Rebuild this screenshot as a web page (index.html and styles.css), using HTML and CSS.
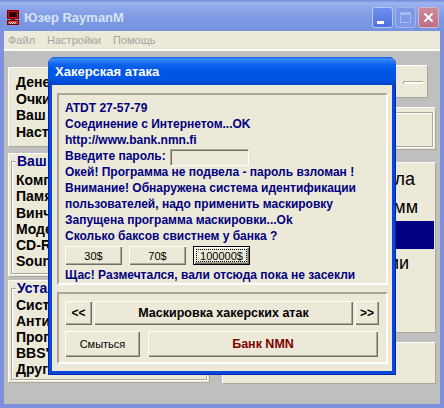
FILE: index.html
```html
<!DOCTYPE html>
<html>
<head>
<meta charset="utf-8">
<title>Юзер RaymanM</title>
<link rel="stylesheet" href="styles.css">
</head>
<body>
<div class="window">
  <div class="titlebar">
    <svg class="appicon" width="12" height="15" viewBox="0 0 12 15">
      <rect x="0.5" y="0.5" width="11" height="8" fill="#d81010" stroke="#700"/>
      <rect x="2" y="2" width="8" height="5" fill="#2a0000"/>
      <rect x="4" y="9" width="4" height="1" fill="#900"/>
      <rect x="0.5" y="10.5" width="11" height="4" fill="#e03030" stroke="#700"/>
      <path d="M2 12.5h1M4 12.5h1M6 12.5h1M8 12.5h1M3 13.5h1M5 13.5h1M7 13.5h1" stroke="#fff" stroke-width="1"/>
    </svg>
    <span class="title">Юзер RaymanM</span>
    <div class="tbtns">
      <span class="tbtn tmin"><span class="us"></span></span>
      <span class="tbtn tmax"><span class="sq"></span></span>
      <span class="tbtn tclose">
        <svg width="11" height="11" viewBox="0 0 11 11"><path d="M1.5 1.5l8 8M9.5 1.5l-8 8" stroke="#fff" stroke-width="2"/></svg>
      </span>
    </div>
  </div>
  <div class="frame">
    <div class="menubar"><span>Файл</span><span>Настройки</span><span>Помощь</span></div>
    <div class="client">
      <div class="col colleft">
        <div class="panel pa">
          <div>Дене</div>
          <div>Очки</div>
          <div>Ваш</div>
          <div>Наст</div>
        </div>
        <div class="panel pb">
          <fieldset class="grp">
            <legend>Ваш к</legend>
            <div class="items items-b">
              <div>Комп</div>
              <div>Памя</div>
              <div>Винч</div>
              <div>Моде</div>
              <div>CD-R</div>
              <div>Soun</div>
            </div>
          </fieldset>
        </div>
        <div class="panel pc">
          <fieldset class="grp">
            <legend>Устан</legend>
            <div class="items items-c">
              <div>Сист</div>
              <div>Анти</div>
              <div>Прог</div>
              <div>BBS'</div>
              <div>Друг</div>
            </div>
          </fieldset>
        </div>
      </div>
      <div class="col colright">
        <div class="panel p1"><span class="slot"></span></div>
        <div class="panel p2"><div class="etch"></div></div>
        <div class="panel p3">
          <div class="list">
            <div class="lrow r1">ла</div>
            <div class="lrow r2">мм</div>
            <div class="lrow r3 sel"></div>
            <div class="lrow r4">ии</div>
          </div>
        </div>
        <div class="panel p4"></div>
      </div>
    </div>
  </div>

  <div class="dialog">
    <div class="dtitle">Хакерская атака</div>
    <div class="dbody">
      <div class="sunk log">
        <div class="ln">ATDT 27-57-79</div>
        <div class="ln">Соединение с Интернетом...OK</div>
        <div class="ln">http://www.bank.nmn.fi</div>
        <div class="ln pw"><span class="lbl">Введите пароль:</span><span class="inp"></span></div>
        <div class="ln">Окей! Программа не подвела - пароль взломан !</div>
        <div class="ln">Внимание! Обнаружена система идентификации</div>
        <div class="ln">пользователей, надо применить маскировку</div>
        <div class="ln">Запущена программа маскировки...Ok</div>
        <div class="ln">Сколько баксов свистнем у банка ?</div>
        <div class="bets">
          <button class="btn bet">30$</button>
          <button class="btn bet">70$</button>
          <button class="btn bet focus">100000$</button>
        </div>
        <div class="ln last">Щас! Размечтался, вали отсюда пока не засекли</div>
      </div>
      <div class="sunk ctrls">
        <div class="brow1">
          <button class="btn bold nav">&lt;&lt;</button>
          <button class="btn bold wide">Маскировка хакерских атак</button>
          <button class="btn bold nav2">&gt;&gt;</button>
        </div>
        <div class="brow2">
          <button class="btn run">Смыться</button>
          <button class="btn bold bank">Банк NMN</button>
        </div>
      </div>
    </div>
  </div>
</div>
</body>
</html>
```

FILE: styles.css
```css
* { box-sizing: border-box; margin: 0; padding: 0; }
html, body { width: 444px; height: 408px; overflow: hidden; }
body { font-family: "Liberation Sans", Arial, sans-serif; background: #7f91de; }

.window {
  position: relative;
  width: 444px;
  height: 408px;
  display: flex;
  flex-direction: column;
  background: #7f91de;
}

/* main title bar (inactive XP) */
.titlebar {
  height: 31px;
  flex: none;
  display: flex;
  align-items: center;
  padding: 4px 5px 0 7px;
  background: linear-gradient(#6f8ad8 0px, #9fb4ee 3px, #8ea7ea 8px, #7d99e3 18px, #7693e0 31px);
}
.appicon { display: block; flex: none; }
.title {
  margin-left: 5px;
  color: #d8e3f8;
  font: bold 13px "Liberation Sans", Arial, sans-serif;
}
.tbtns { margin-left: auto; display: flex; gap: 2px; }
.tbtn {
  width: 21px;
  height: 21px;
  border-radius: 3px;
  border: 1px solid #b9c8f3;
  display: flex;
  align-items: center;
  justify-content: center;
}
.tmin { background: linear-gradient(#6d8ff0, #4f72e4); justify-content: flex-start; align-items: flex-end; }
.tmin .us { width: 7px; height: 3px; background: #fff; margin: 0 0 3px 4px; }
.tmax { background: #7f99e6; border-color: #a4b7ef; }
.tmax .sq { width: 11px; height: 11px; border: 1px solid #a9bbee; border-top-width: 3px; }
.tclose { background: linear-gradient(#cf8a9a, #bb6f84); border-color: #d8b6c6; }
.tclose svg { display: block; }

/* frame */
.frame {
  flex: 1;
  margin: 0 4px 4px;
  display: flex;
  flex-direction: column;
}
.menubar {
  height: 20px;
  flex: none;
  background: #ece9d8;
  border-bottom: 2px solid #fff;
  display: flex;
  align-items: center;
  gap: 12px;
  padding-left: 4px;
  font-size: 11px;
  color: #a3a3a3;
}
.client {
  flex: 1;
  background: #bfbfbf;
  display: flex;
  gap: 12px;
  padding: 0 4px;
}
.col { display: flex; flex-direction: column; }
.colleft { width: 202px; padding-top: 16px; }
.colright { width: 214px; padding-top: 14px; }

.panel {
  background: #ece9d8;
  border: 1px solid;
  border-color: #fff #aca899 #aca899 #fff;
  flex: none;
}

.pa {
  height: 80px;
  margin-bottom: 6px;
  padding: 6px 0 0 7px;
  font: bold 14px "Liberation Sans", Arial, sans-serif;
  line-height: 16.5px;
  color: #000;
  white-space: nowrap;
  overflow: hidden;
}
.pb { height: 124px; margin-bottom: 3px; padding: 0 2px 2px; }
.pc { height: 103px; padding: 0 2px 2px; }

.grp {
  height: 100%;
  border: 1px solid #aca899;
  box-shadow: inset 1px 1px 0 #fff, 1px 1px 0 #fff;
  padding: 0 0 0 4px;
  min-width: 0;
}
.grp legend {
  font: bold 14px "Liberation Sans", Arial, sans-serif;
  line-height: 14px;
  color: #000080;
  padding: 0 1px;
  background: #ece9d8;
  white-space: nowrap;
}
.items {
  font: bold 14px "Liberation Sans", Arial, sans-serif;
  color: #000;
  white-space: nowrap;
}
.items-b { line-height: 16.3px; padding-top: 4px; }
.items-c { line-height: 16px; padding-top: 2px; }

.p1 {
  height: 33px;
  width: 206px;
  margin-bottom: 9px;
  display: flex;
  justify-content: flex-end;
  align-items: flex-start;
  padding: 15px 4px 0 0;
}
.slot {
  width: 20px;
  height: 3px;
  background: #fff;
  border-top: 1px solid #aca899;
  border-left: 1px solid #aca899;
}
.p2 {
  height: 43px;
  margin-bottom: 12px;
  padding: 4px 2px 2px 4px;
  display: flex;
}
.etch {
  flex: 1;
  border: 1px solid #aca899;
  box-shadow: inset 1px 1px 0 #fff, 1px 1px 0 #fff;
}
.p3 {
  height: 171px;
  margin-bottom: 9px;
  padding: 2px 1px;
}
.lrow {
  height: 28px;
  line-height: 28px;
  font-size: 18px;
  color: #000;
  text-align: right;
  white-space: nowrap;
  overflow: hidden;
}
.r1 { padding-right: 19px; }
.r2 { padding-right: 16px; }
.r3 { padding-right: 60px; }
.r4 { padding-right: 25px; }
.sel { background: #000080; color: #fff; }
.p4 { height: 42px; }

/* dialog */
.dialog {
  position: absolute;
  left: 48px;
  top: 57px;
  width: 348px;
  height: 318px;
  display: flex;
  flex-direction: column;
  background: #0847da;
  border-radius: 8px 8px 0 0;
  box-shadow: inset 1px 0 0 #0026b0, inset -1px 0 0 #0026b0, inset 0 -1px 0 #0026b0;
}
.dtitle {
  height: 28px;
  flex: none;
  display: flex;
  align-items: center;
  padding-left: 7px;
  color: #fff;
  font: bold 13px "Liberation Sans", Arial, sans-serif;
  border-radius: 8px 8px 0 0;
  background: linear-gradient(#0a5ae8 0px, #3d8ef8 2px, #2a7cf5 4px, #0d62ec 8px, #0057e6 14px, #0054e3 22px, #0048d4 26px, #003ebf 28px);
}
.dbody {
  flex: 1;
  margin: 0 4px 4px;
  background: #ece9d8;
  padding-top: 8px;
}
.sunk {
  margin: 0 4px 0 5px;
  border: 2px solid;
  border-color: #aca899 #fff #fff #aca899;
}
.log {
  height: 192px;
  padding: 5px 0 0 6px;
  font: bold 12px "Liberation Sans", Arial, sans-serif;
  color: #000080;
}
.ln { height: 16px; line-height: 16px; white-space: nowrap; }
.pw { display: flex; align-items: flex-start; }
.lbl { width: 105px; flex: none; }
.inp {
  width: 79px;
  height: 17px;
  margin-top: 1px;
  background: #ece9d8;
  border: 1px solid;
  border-color: #aca899 #fff #fff #aca899;
  box-shadow: inset 1px 1px 0 #716f64;
}
.bets { display: flex; gap: 7px; margin-top: 2px; height: 19px; }
.last { margin-top: 2px; }

.btn {
  font: 11px "Liberation Sans", Arial, sans-serif;
  color: #000;
  background: #ece9d8;
  border: none;
  box-shadow: inset 1px 1px 0 #fff, inset -1px -1px 0 #716f64, inset -2px -2px 0 #aca899;
  display: flex;
  align-items: center;
  justify-content: center;
  padding: 0;
  white-space: nowrap;
}
.bold { font-weight: bold; font-size: 12.5px; }
.bet { width: 57px; height: 19px; }
.focus {
  border: 1px solid #000;
  outline: 1px dotted #000;
  outline-offset: -4px;
}

.ctrls {
  margin-top: 7px;
  height: 72px;
  padding: 7px 0 0 6px;
}
.brow1 { display: flex; gap: 2px; height: 24px; }
.nav { width: 27px; height: 24px; font-size: 12px; }
.wide { width: 259px; height: 24px; }
.nav2 { width: 24px; height: 24px; font-size: 12px; }
.brow2 { display: flex; gap: 8px; height: 26px; margin-top: 6px; }
.run { width: 75px; height: 26px; }
.bank { width: 230px; height: 26px; color: #800000; }
```
